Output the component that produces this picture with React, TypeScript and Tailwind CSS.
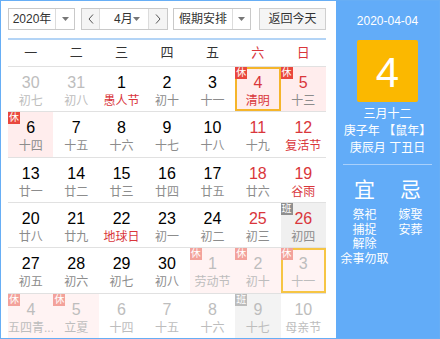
import type { ReactNode } from "react";

type Day = {
  n: number;
  lunar: string;
  other?: boolean; // belongs to prev / next month
  redNum?: boolean;
  redLunar?: boolean;
  badge?: "rest" | "work";
  selected?: "today" | "hover";
};

const weekdays = ["一", "二", "三", "四", "五", "六", "日"];

const weeks: Day[][] = [
  [
    { n: 30, lunar: "初七", other: true },
    { n: 31, lunar: "初八", other: true },
    { n: 1, lunar: "愚人节", redLunar: true },
    { n: 2, lunar: "初十" },
    { n: 3, lunar: "十一" },
    { n: 4, lunar: "清明", redNum: true, redLunar: true, badge: "rest", selected: "today" },
    { n: 5, lunar: "十三", redNum: true, badge: "rest" },
  ],
  [
    { n: 6, lunar: "十四", badge: "rest" },
    { n: 7, lunar: "十五" },
    { n: 8, lunar: "十六" },
    { n: 9, lunar: "十七" },
    { n: 10, lunar: "十八" },
    { n: 11, lunar: "十九", redNum: true },
    { n: 12, lunar: "复活节", redNum: true, redLunar: true },
  ],
  [
    { n: 13, lunar: "廿一" },
    { n: 14, lunar: "廿二" },
    { n: 15, lunar: "廿三" },
    { n: 16, lunar: "廿四" },
    { n: 17, lunar: "廿五" },
    { n: 18, lunar: "廿六", redNum: true },
    { n: 19, lunar: "谷雨", redNum: true, redLunar: true },
  ],
  [
    { n: 20, lunar: "廿八" },
    { n: 21, lunar: "廿九" },
    { n: 22, lunar: "地球日", redLunar: true },
    { n: 23, lunar: "初一" },
    { n: 24, lunar: "初二" },
    { n: 25, lunar: "初三", redNum: true },
    { n: 26, lunar: "初四", redNum: true, badge: "work" },
  ],
  [
    { n: 27, lunar: "初五" },
    { n: 28, lunar: "初六" },
    { n: 29, lunar: "初七" },
    { n: 30, lunar: "初八" },
    { n: 1, lunar: "劳动节", other: true, badge: "rest" },
    { n: 2, lunar: "初十", other: true, badge: "rest" },
    { n: 3, lunar: "十一", other: true, badge: "rest", selected: "hover" },
  ],
  [
    { n: 4, lunar: "五四青...", other: true, badge: "rest" },
    { n: 5, lunar: "立夏", other: true, badge: "rest" },
    { n: 6, lunar: "十四", other: true },
    { n: 7, lunar: "十五", other: true },
    { n: 8, lunar: "十六", other: true },
    { n: 9, lunar: "十七", other: true, badge: "work" },
    { n: 10, lunar: "母亲节", other: true },
  ],
];

const font = "font-['Liberation_Sans','Noto_Sans_CJK_SC',sans-serif]";

function Caret() {
  return (
    <svg width="7" height="4" viewBox="0 0 7 4">
      <path d="M0 0h7L3.5 4z" fill="#777" />
    </svg>
  );
}

function Chevron({ dir }: { dir: "left" | "right" }) {
  return (
    <svg width="6" height="10" viewBox="0 0 6 10">
      <path
        d={dir === "left" ? "M5 0.5L1 5l4 4.5" : "M1 0.5L5 5l-4 4.5"}
        fill="none"
        stroke="#555"
        strokeWidth="1"
      />
    </svg>
  );
}

function Select({ label, width, textWidth }: { label: string; width: string; textWidth: string }) {
  return (
    <div className={`flex h-[22px] ${width} border border-[#c9c9c9] bg-white`}>
      <div className={`${textWidth} flex items-center justify-center text-[12px] text-[#333]`}>{label}</div>
      <div className="flex flex-1 items-center justify-center border-l border-[#dcdcdc]">
        <Caret />
      </div>
    </div>
  );
}

function Cell({ d }: { d: Day }) {
  let bg = "";
  if (d.badge === "rest") bg = d.other ? "bg-[#fff3f3]" : "bg-[#ffeded]";
  if (d.badge === "work") bg = d.other ? "bg-[#f3f3f3]" : "bg-[#f0f0f0]";

  const numColor = d.other ? "text-[#bdbdbd]" : d.redNum ? "text-[#d9363b]" : "text-black";
  const lunarColor = d.other ? "text-[#bdbdbd]" : d.redLunar ? "text-[#d9363b]" : "text-[#8c8c8c]";

  let badge: ReactNode = null;
  if (d.badge) {
    const badgeBg =
      d.badge === "rest"
        ? d.other
          ? "bg-[#f3a29b]"
          : "bg-[#e9473d]"
        : d.other
          ? "bg-[#bcbcbc]"
          : "bg-[#8f8f8f]";
    badge = (
      <div
        className={`absolute left-0 top-0 flex h-[12px] w-[12px] items-center justify-center text-[10px] leading-none text-white ${badgeBg}`}
      >
        {d.badge === "rest" ? "休" : "班"}
      </div>
    );
  }

  const ring =
    d.selected === "today"
      ? "border-2 border-[#f5b52b]"
      : d.selected === "hover"
        ? "border-2 border-[#f6c544]"
        : "";

  return (
    <div className="border-t border-[#e1e1e1] flex">
      <div className={`relative flex flex-1 flex-col items-center pt-[6px] ${bg}`}>
        {ring && <div className={`absolute inset-0 ${ring}`} />}
        {badge}
        <div className={`text-[16px] leading-[20px] ${numColor}`}>{d.n}</div>
        <div className={`whitespace-nowrap text-[12px] leading-[16px] ${lunarColor}`}>{d.lunar}</div>
      </div>
    </div>
  );
}

export default function App() {
  return (
    <div className={`flex h-[339px] w-[440px] border border-[#67aef5] ${font}`}>
      {/* Calendar */}
      <div className="flex w-[335px] flex-col bg-white pl-[7px] pt-[7px]">
        {/* Toolbar */}
        <div className="flex w-[318px] items-center">
          <Select label="2020年" width="w-[67px]" textWidth="w-[46px]" />
          <div className="ml-[6px] flex h-[22px] w-[87px] border border-[#c9c9c9] bg-white">
            <div className="flex w-[18px] items-center justify-center border-r border-[#dcdcdc] bg-[#f4f4f4]">
              <Chevron dir="left" />
            </div>
            <div className="flex flex-1 items-center pl-[14px] pr-[8px] text-[12px] text-[#333]">
              <span className="flex-1">4月</span>
              <Caret />
            </div>
            <div className="flex w-[19px] items-center justify-center border-l border-[#dcdcdc] bg-[#f4f4f4]">
              <Chevron dir="right" />
            </div>
          </div>
          <div className="ml-[5px]">
            <Select label="假期安排" width="w-[78px]" textWidth="w-[58px]" />
          </div>
          <button className="ml-auto flex h-[22px] w-[67px] items-center justify-center border border-[#cfcfcf] bg-[#f5f5f5] text-[12px] text-[#333]">
            返回今天
          </button>
        </div>

        <div className="mt-[8px] h-[2px] w-[318px] bg-[#b3d4f6]" />

        {/* Weekday header */}
        <div className="grid h-[26px] w-[318px] grid-cols-7 items-center">
          {weekdays.map((w, i) => (
            <div
              key={w}
              className={`text-center text-[13px] ${i >= 5 ? "text-[#d9363b]" : "text-[#333]"}`}
            >
              {w}
            </div>
          ))}
        </div>

        {/* Days */}
        <div className="grid w-[318px] flex-1 grid-cols-7 grid-rows-6">
          {weeks.flat().map((d, i) => (
            <Cell key={i} d={d} />
          ))}
        </div>
      </div>

      {/* Side panel */}
      <div className="flex flex-1 flex-col items-center bg-[#62acf8] text-white">
        <div className="mt-[12px] text-[12px] leading-[16px]">2020-04-04</div>
        <div className="mt-[11px] flex h-[62px] w-[61px] items-center justify-center rounded-[2px] bg-[#fbb800] pt-[4px] text-[42px] leading-none">
          4
        </div>
        <div className="mt-[4px] text-[12px] leading-[16px]">三月十二</div>
        <div className="mt-[1px] text-[12px] leading-[16px]">庚子年 【鼠年】</div>
        <div className="mt-[1px] text-[12px] leading-[16px]">庚辰月 丁丑日</div>
        <div className="mt-[8px] h-px w-[89px] bg-[#a9d0fb]" />
        <div className="mt-[12px] flex w-[92px] text-[12px]">
          <div className="flex w-1/2 flex-col items-center">
            <div className="mb-[5px] text-[21px] leading-[26px]">宜</div>
            <div className="leading-[14.5px]">祭祀</div>
            <div className="leading-[14.5px]">捕捉</div>
            <div className="leading-[14.5px]">解除</div>
            <div className="whitespace-nowrap leading-[14.5px]">余事勿取</div>
          </div>
          <div className="flex w-1/2 flex-col items-center">
            <div className="mb-[5px] text-[21px] leading-[26px]">忌</div>
            <div className="leading-[14.5px]">嫁娶</div>
            <div className="leading-[14.5px]">安葬</div>
          </div>
        </div>
      </div>
    </div>
  );
}
